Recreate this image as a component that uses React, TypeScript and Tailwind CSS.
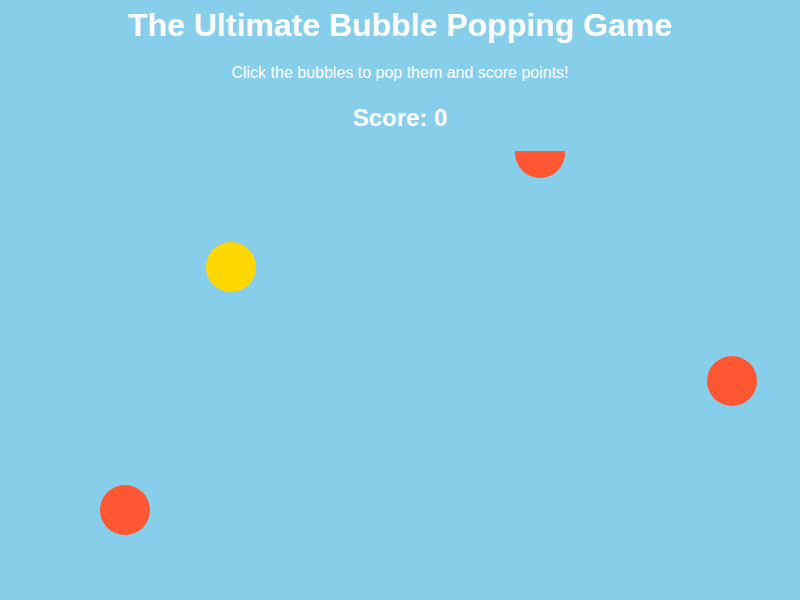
import React from 'react'

type Bubble = { id: number; x: number; y: number; color: string }

// positions relative to the game area (top-left of each bubble)
const bubbles: Bubble[] = [
  { id: 1, x: 515, y: -23, color: 'bg-[#ff5733]' },
  { id: 2, x: 206, y: 91, color: 'bg-[#ffd700]' },
  { id: 3, x: 707, y: 205, color: 'bg-[#ff5733]' },
  { id: 4, x: 100, y: 334, color: 'bg-[#ff5733]' },
]

export default function App() {
  return (
    <div className="flex h-[600px] w-[800px] flex-col overflow-hidden bg-[#87ceeb] text-center text-white font-['Liberation_Sans',Arial,sans-serif]">
      <h1 className="mt-[6px] text-[32px] font-bold leading-[38px]">The Ultimate Bubble Popping Game</h1>
      <p className="mt-[18px] text-[16px] leading-[22px]">Click the bubbles to pop them and score points!</p>
      <div className="mt-[20px] text-[24px] font-bold leading-[28px]">Score: 0</div>
      <div className="relative mt-[19px] flex-1 overflow-hidden">
        {bubbles.map((b) => (
          <div
            key={b.id}
            className={`absolute h-[50px] w-[50px] cursor-pointer rounded-full ${b.color}`}
            style={{ left: b.x, top: b.y }}
          />
        ))}
      </div>
    </div>
  )
}
